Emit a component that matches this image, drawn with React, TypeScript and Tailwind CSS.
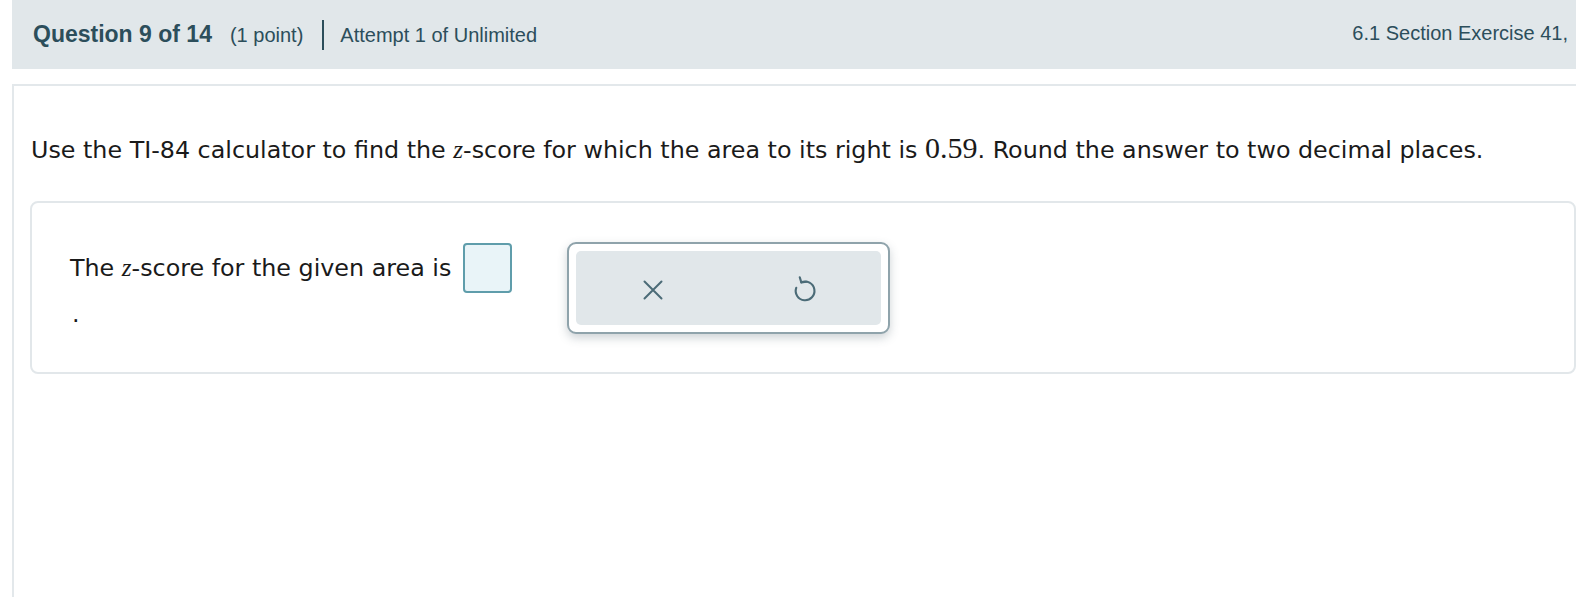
import React from "react";

function XIcon() {
    return (
        <svg width="24" height="24" viewBox="0 0 24 24" fill="none" stroke="#4b6b77" strokeWidth="2" strokeLinecap="round">
            <path d="M3.5 3.5L20.5 20.5M20.5 3.5L3.5 20.5" />
        </svg>
    );
}

function UndoIcon() {
    return (
        <svg width="30" height="30" viewBox="0 0 24 24" fill="none" stroke="#4b6b77" strokeWidth="1.7" strokeLinecap="round" strokeLinejoin="round">
            <path d="M9.04 6.66A7.5 7.5 0 1 1 5 11" />
            <path d="M7.8 2.6L9.04 6.66L13.2 6.2" />
        </svg>
    );
}

export default function App() {
    return (
        <div className="w-full h-[597px] overflow-hidden bg-white pl-[12px]" style={{ fontFamily: "'Liberation Sans', Arial, sans-serif" }}>
            <header className="h-[69px] bg-[#e1e7ea] flex items-center justify-between pl-[21px] pr-[8px] text-[#2c4e5b]">
                <div className="flex items-center">
                    <span className="text-[23px] font-bold">Question 9 of 14</span>
                    <span className="text-[20px] ml-[18px]">(1 point)</span>
                    <span className="w-[2px] h-[30px] bg-[#2c4e5b] ml-[19px] mr-[16px]"></span>
                    <span className="text-[20px]">Attempt 1 of Unlimited</span>
                </div>
                <span className="text-[20px] whitespace-nowrap mb-[3px]">6.1 Section Exercise 41,</span>
            </header>

            <main className="mt-[15px] border-l-2 border-t-2 border-[#e3e8eb] h-full pt-[47px] pl-[16px]" style={{ fontFamily: "'DejaVu Sans', Verdana, sans-serif" }}>
                <p className="text-[23.8px] leading-[30px] text-[#1a1a1a] pl-[1px] whitespace-nowrap">
                    Use the TI-84 calculator to find the{" "}
                    <i className="text-[25px]" style={{ fontFamily: "'Liberation Serif', serif" }}>z</i>
                    -score for which the area to its right is{" "}
                    <span className="text-[30px]" style={{ fontFamily: "'Liberation Serif', serif" }}>0.59</span>
                    . Round the answer to two decimal places.
                </p>

                <div className="mt-[36px] h-[173px] border-2 border-[#e2e7ea] rounded-lg pt-[40px] pl-[38px]">
                    <div className="flex items-start">
                        <div className="flex flex-col">
                            <div className="flex items-center">
                                <span className="text-[23.8px] text-[#1a1a1a] whitespace-nowrap">
                                    The{" "}
                                    <i className="text-[25px]" style={{ fontFamily: "'Liberation Serif', serif" }}>z</i>
                                    -score for the given area is
                                </span>
                                <div className="ml-[12px] w-[49px] h-[50px] rounded-[4px] border-2 border-[#5f9dab] bg-[#e9f4f8]"></div>
                            </div>
                            <span className="text-[23.8px] leading-[24px] text-[#1a1a1a] mt-[9px] pl-[2px]">.</span>
                        </div>
                        <div className="ml-[55px] -mt-[1px] w-[323px] h-[92px] rounded-[9px] border-2 border-[#8fa3ab] bg-white p-[7px] shadow-[0_4px_10px_rgba(60,80,90,0.25)]">
                            <div className="h-full rounded-[5px] bg-[#e1e7ea] flex items-center">
                                <div className="flex-1 flex justify-center pt-[3px]">
                                    <XIcon />
                                </div>
                                <div className="flex-1 flex justify-center pt-[1px]">
                                    <UndoIcon />
                                </div>
                            </div>
                        </div>
                    </div>
                </div>
            </main>
        </div>
    );
}
